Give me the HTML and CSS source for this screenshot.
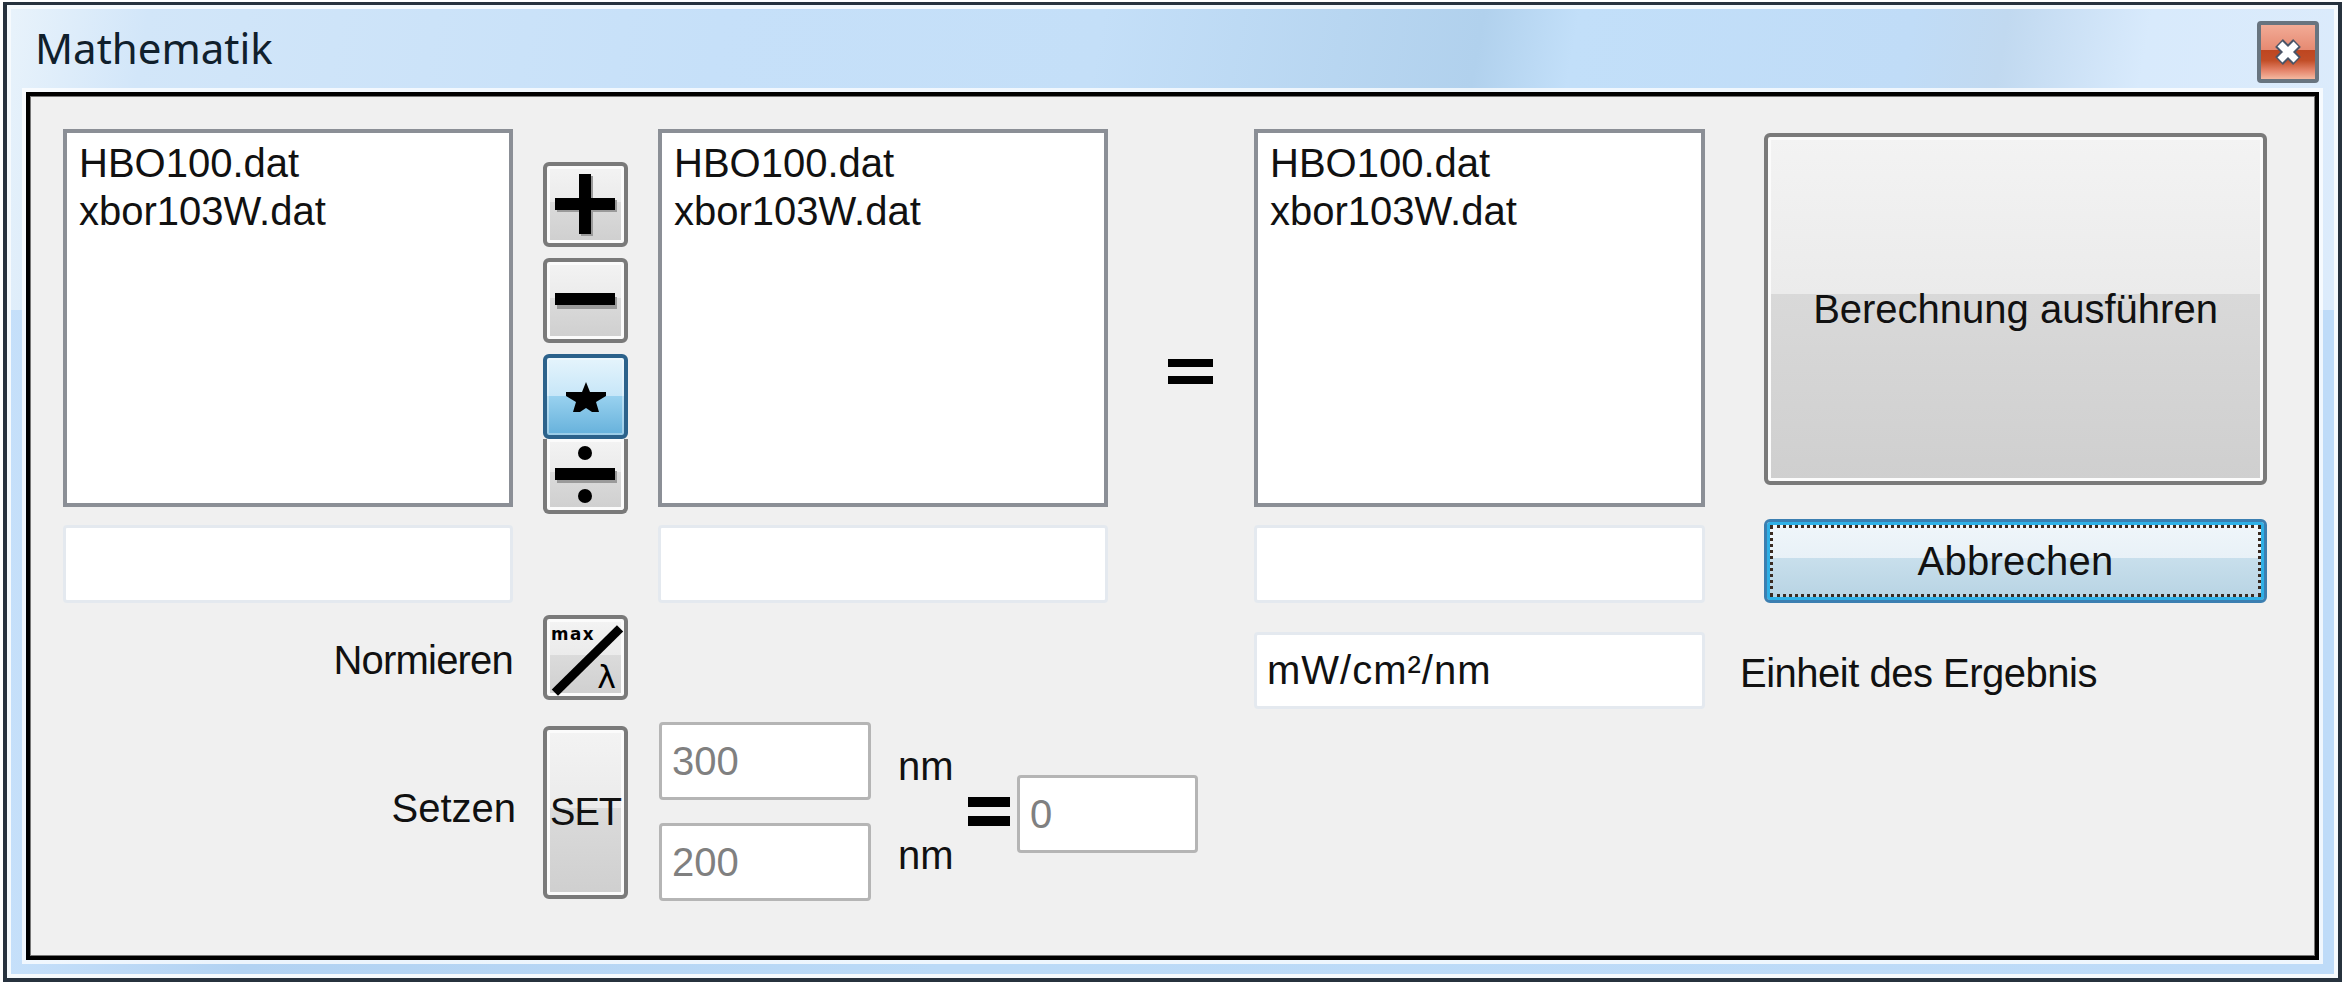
FILE: index.html
```html
<!DOCTYPE html>
<html lang="de">
<head>
  <meta charset="UTF-8" />
  <title>Mathematik</title>
  <link rel="stylesheet" href="styles.css">
</head>
<body>

<div class="window">
  <div class="titlebar">
    <span class="title">Mathematik</span>
    <button class="close">
      <svg width="30" height="26" viewBox="0 0 30 26">
        <path d="M6 4 L24 22 M24 4 L6 22" stroke="#4a5568" stroke-width="11" fill="none"/>
        <path d="M7 5 L23 21 M23 5 L7 21" stroke="#fff" stroke-width="7" fill="none"/>
      </svg>
    </button>
  </div>

  <div class="frame">
    <!-- Lists and operators -->
    <div class="upper">
      <div class="list-col">
        <ul class="listbox"><li>HBO100.dat</li><li>xbor103W.dat</li></ul>
        <input class="field" type="text">
      </div>

      <div class="ops">
        <button class="btn op">
          <svg width="62" height="62" viewBox="0 0 62 62">
            <rect x="26" y="2" width="12" height="60" fill="#9a9a9a"/>
            <rect x="2" y="26" width="60" height="12" fill="#9a9a9a"/>
            <rect x="24" y="0" width="12" height="60" fill="#000"/>
            <rect x="0" y="24" width="60" height="12" fill="#000"/>
          </svg>
        </button>
        <button class="btn op">
          <svg width="62" height="16" viewBox="0 0 62 16">
            <rect x="2" y="4" width="60" height="12" fill="#9a9a9a"/>
            <rect x="0" y="0" width="60" height="12" fill="#000"/>
          </svg>
        </button>
        <button class="btn op op-active">
          <svg width="40" height="30" viewBox="0 0 40 30">
            <polygon points="20,0 24,10 40,10 40,14 30,20 33,30 26,30 20,26 14,30 7,30 10,20 0,14 0,10 16,10" fill="#000"/>
          </svg>
        </button>
        <button class="btn op op-div">
          <svg width="62" height="58" viewBox="0 0 62 58">
            <circle cx="30" cy="7" r="7" fill="#000"/>
            <rect x="2" y="25" width="60" height="12" fill="#9a9a9a"/>
            <rect x="0" y="22" width="60" height="12" fill="#000"/>
            <circle cx="30" cy="50" r="7" fill="#000"/>
          </svg>
        </button>
      </div>

      <div class="list-col">
        <ul class="listbox"><li>HBO100.dat</li><li>xbor103W.dat</li></ul>
        <input class="field" type="text">
      </div>

      <div class="eq-col">
        <div class="equals"></div>
      </div>

      <div class="list-col list-last">
        <ul class="listbox"><li>HBO100.dat</li><li>xbor103W.dat</li></ul>
        <input class="field" type="text">
      </div>

      <div class="actions">
        <button class="btn run">Berechnung ausführen</button>
        <button class="btn cancel">Abbrechen</button>
      </div>
    </div>

    <!-- Normieren / Setzen -->
    <div class="lower">
      <label class="row-label label-norm">Normieren</label>
      <button class="btn op op-norm">
        <svg class="norm-icon" width="78" height="78" viewBox="0 0 78 78">
          <text x="4" y="21" class="max-text">max</text>
          <line x1="8" y1="74" x2="74" y2="9" stroke="#000" stroke-width="9"/>
          <text x="51" y="69" class="lambda-text">λ</text>
        </svg>
      </button>
      <input class="field unit" type="text" value="mW/cm²/nm">
      <span class="unit-label">Einheit des Ergebnis</span>

      <label class="row-label label-set">Setzen</label>
      <button class="btn op op-set">SET</button>
      <div class="set-group">
        <div class="set-inputs">
          <input class="num" type="text" value="300" disabled>
          <input class="num" type="text" value="200" disabled>
        </div>
        <div class="set-units">
          <span>nm</span>
          <span>nm</span>
        </div>
        <div class="equals equals-small"></div>
        <input class="num num-result" type="text" value="0" disabled>
      </div>
    </div>
  </div>
</div>

</body>
</html>
```

FILE: styles.css
```css
html, body {
  margin: 0;
  padding: 0;
  background: #fff;
}

body {
  width: 2346px;
  height: 985px;
  overflow: hidden;
  font-family: "Liberation Sans", Arial, sans-serif;
  font-size: 40px;
  color: #111;
}

button, input {
  font-family: inherit;
  font-size: inherit;
  color: inherit;
  margin: 0;
  box-sizing: border-box;
}

.window {
  box-sizing: border-box;
  width: 2339px;
  height: 980px;
  margin: 2px 0 0 3px;
  padding: 0 19px 18px 19px;
  border: 4px solid #27323e;
  border-top-width: 3px;
  box-shadow: inset 0 0 0 4px #f6fafd;
  background:
    linear-gradient(100deg, #e9f3fb 0, #d2e6f9 6%, #c6e0f9 30%, #c4dff8 46%, #b1d1ed 62%, #c2dff9 66%, #c0dcf7 80%, #c1d9f0 84%, #d8eafc 90%, #dcebfb 100%) top / 100% 305px no-repeat,
    linear-gradient(90deg, #c6e0fa 0, #b2d2f2 10%, #bbdaf7 40%, #bedbf8 100%);
}

/* Title bar */
.titlebar {
  height: 87px;
  display: flex;
  align-items: center;
  justify-content: space-between;
}

.title {
  font-family: "Noto Sans", sans-serif;
  font-size: 42px;
  color: #10202c;
  margin: -3px 0 0 9px;
}

.close {
  width: 62px;
  height: 62px;
  margin-top: 7px;
  padding: 0;
  border: 4px solid #68747f;
  border-radius: 4px;
  display: flex;
  align-items: center;
  justify-content: center;
  background: linear-gradient(#f2ab96 0, #e68a72 46%, #bd4620 46%, #c24e28 66%, #e4846a 84%, #f4b8a0 100%);
}

/* Inner frame */
.frame {
  box-sizing: border-box;
  height: 868px;
  padding: 33px 0 0 33px;
  border: 4px solid #000;
  background: #f0f0f0;
  box-shadow: 0 0 0 4px rgba(255, 255, 255, 0.75), inset 0 0 0 1px #777;
}

.upper {
  display: flex;
  height: 474px;
}

.list-col {
  width: 450px;
  display: flex;
  flex-direction: column;
  gap: 18px;
}

.list-last {
  width: 451px;
}

.listbox {
  box-sizing: border-box;
  height: 378px;
  margin: 0;
  padding: 6px 12px;
  list-style: none;
  background: #fff;
  border: 4px solid #8b8f96;
  line-height: 48px;
}

.field {
  width: 100%;
  height: 78px;
  padding: 0 10px;
  background: #fff;
  border: 3px solid #e4e9ef;
  border-radius: 4px;
}

/* Buttons */
.btn {
  box-sizing: border-box;
  padding: 0;
  border: 4px solid #7a7a7a;
  border-radius: 6px;
  box-shadow: inset 0 0 0 3px #fbfbfb;
  background: linear-gradient(#f3f3f3 0, #ebebeb 47%, #dbdbdb 47%, #cfcfcf 100%);
  display: flex;
  align-items: center;
  justify-content: center;
}

.ops {
  width: 85px;
  margin: 33px 30px 0;
  display: flex;
  flex-direction: column;
}

.op {
  width: 85px;
  height: 85px;
  flex: none;
  margin-bottom: 11px;
}

.op-active {
  position: relative;
  z-index: 1;
  height: 85px;
  margin-bottom: 0;
  border-color: #2c628b;
  box-shadow: inset 0 0 0 2px rgba(255, 255, 255, 0.35);
  background: linear-gradient(#e5f4fc 0, #c6e6f8 50%, #98d1ef 50%, #66b1db 100%);
}

.op-div {
  height: 75px;
  margin-bottom: 0;
  border-top: none;
  border-radius: 0 0 6px 6px;
}

.eq-col {
  width: 146px;
  display: flex;
  justify-content: center;
  padding-top: 230px;
  box-sizing: border-box;
}

.equals {
  box-sizing: border-box;
  width: 45px;
  height: 25px;
  margin-left: 18px;
  border-top: 8px solid #000;
  border-bottom: 8px solid #000;
}

.actions {
  width: 503px;
  margin-left: 59px;
  padding-top: 4px;
  display: flex;
  flex-direction: column;
  gap: 34px;
}

.run {
  height: 352px;
  flex: none;
  background: linear-gradient(#f3f3f3 0, #ebebeb 45.5%, #d9d9d9 45.5%, #cfcfcf 100%);
}

.cancel {
  height: 84px;
  flex: none;
  border: 3px solid #3c7fb1;
  outline: 3px dotted #3a2a20;
  outline-offset: -9px;
  box-shadow: inset 0 0 0 3px #2fb0e6;
  letter-spacing: 0.3px;
  background: linear-gradient(#f0f6fa 0, #e8f1f7 46%, #c8dfec 46%, #b7d3e3 100%);
}

/* Normieren and Setzen rows */
.lower {
  display: grid;
  grid-template-columns: 450px 30px 85px 30px 450px 146px 451px 35px 1fr;
  grid-template-rows: 85px 173px;
  row-gap: 26px;
  margin-top: 12px;
}

.row-label {
  grid-column: 1;
  text-align: right;
  align-self: center;
}

.label-norm {
  margin-top: 6px;
  letter-spacing: -0.8px;
}

.label-set {
  margin: -8px -3px 0 0;
}

.op-norm {
  grid-column: 3;
  grid-row: 1;
  margin: 0;
}

.max-text {
  font-family: "DejaVu Sans", sans-serif;
  font-size: 17px;
  font-weight: bold;
  letter-spacing: 1.5px;
}

.lambda-text {
  font-family: "DejaVu Sans", sans-serif;
  font-size: 32px;
}

.unit {
  grid-column: 7;
  grid-row: 1;
  margin-top: 17px;
  height: 77px;
  letter-spacing: 1px;
}

.unit-label {
  grid-column: 9;
  grid-row: 1;
  align-self: center;
  margin-top: 32px;
  white-space: nowrap;
  letter-spacing: -0.5px;
}

.op-set {
  grid-column: 3;
  grid-row: 2;
  height: 173px;
  margin: 0;
  font-size: 38px;
  letter-spacing: -1px;
}

.set-group {
  grid-column: 5 / 8;
  grid-row: 2;
  display: flex;
  align-items: flex-start;
  margin-top: -4px;
}

.set-inputs {
  margin-left: 1px;
  width: 212px;
  display: flex;
  flex-direction: column;
  gap: 23px;
}

.num {
  width: 100%;
  height: 78px;
  padding: 0 10px;
  background: #fff;
  border: 3px solid #b5b5b5;
  border-radius: 4px;
  color: #808080;
}

.set-units {
  width: 70px;
  margin-left: 27px;
  display: flex;
  flex-direction: column;
}

.set-units span {
  height: 89px;
  line-height: 88px;
}

.equals-small {
  width: 42px;
  height: 29px;
  flex: none;
  margin: 75px 0 0;
  border-top-width: 10px;
  border-bottom-width: 10px;
}

.num-result {
  width: 181px;
  margin: 53px 0 0 7px;
}
```
